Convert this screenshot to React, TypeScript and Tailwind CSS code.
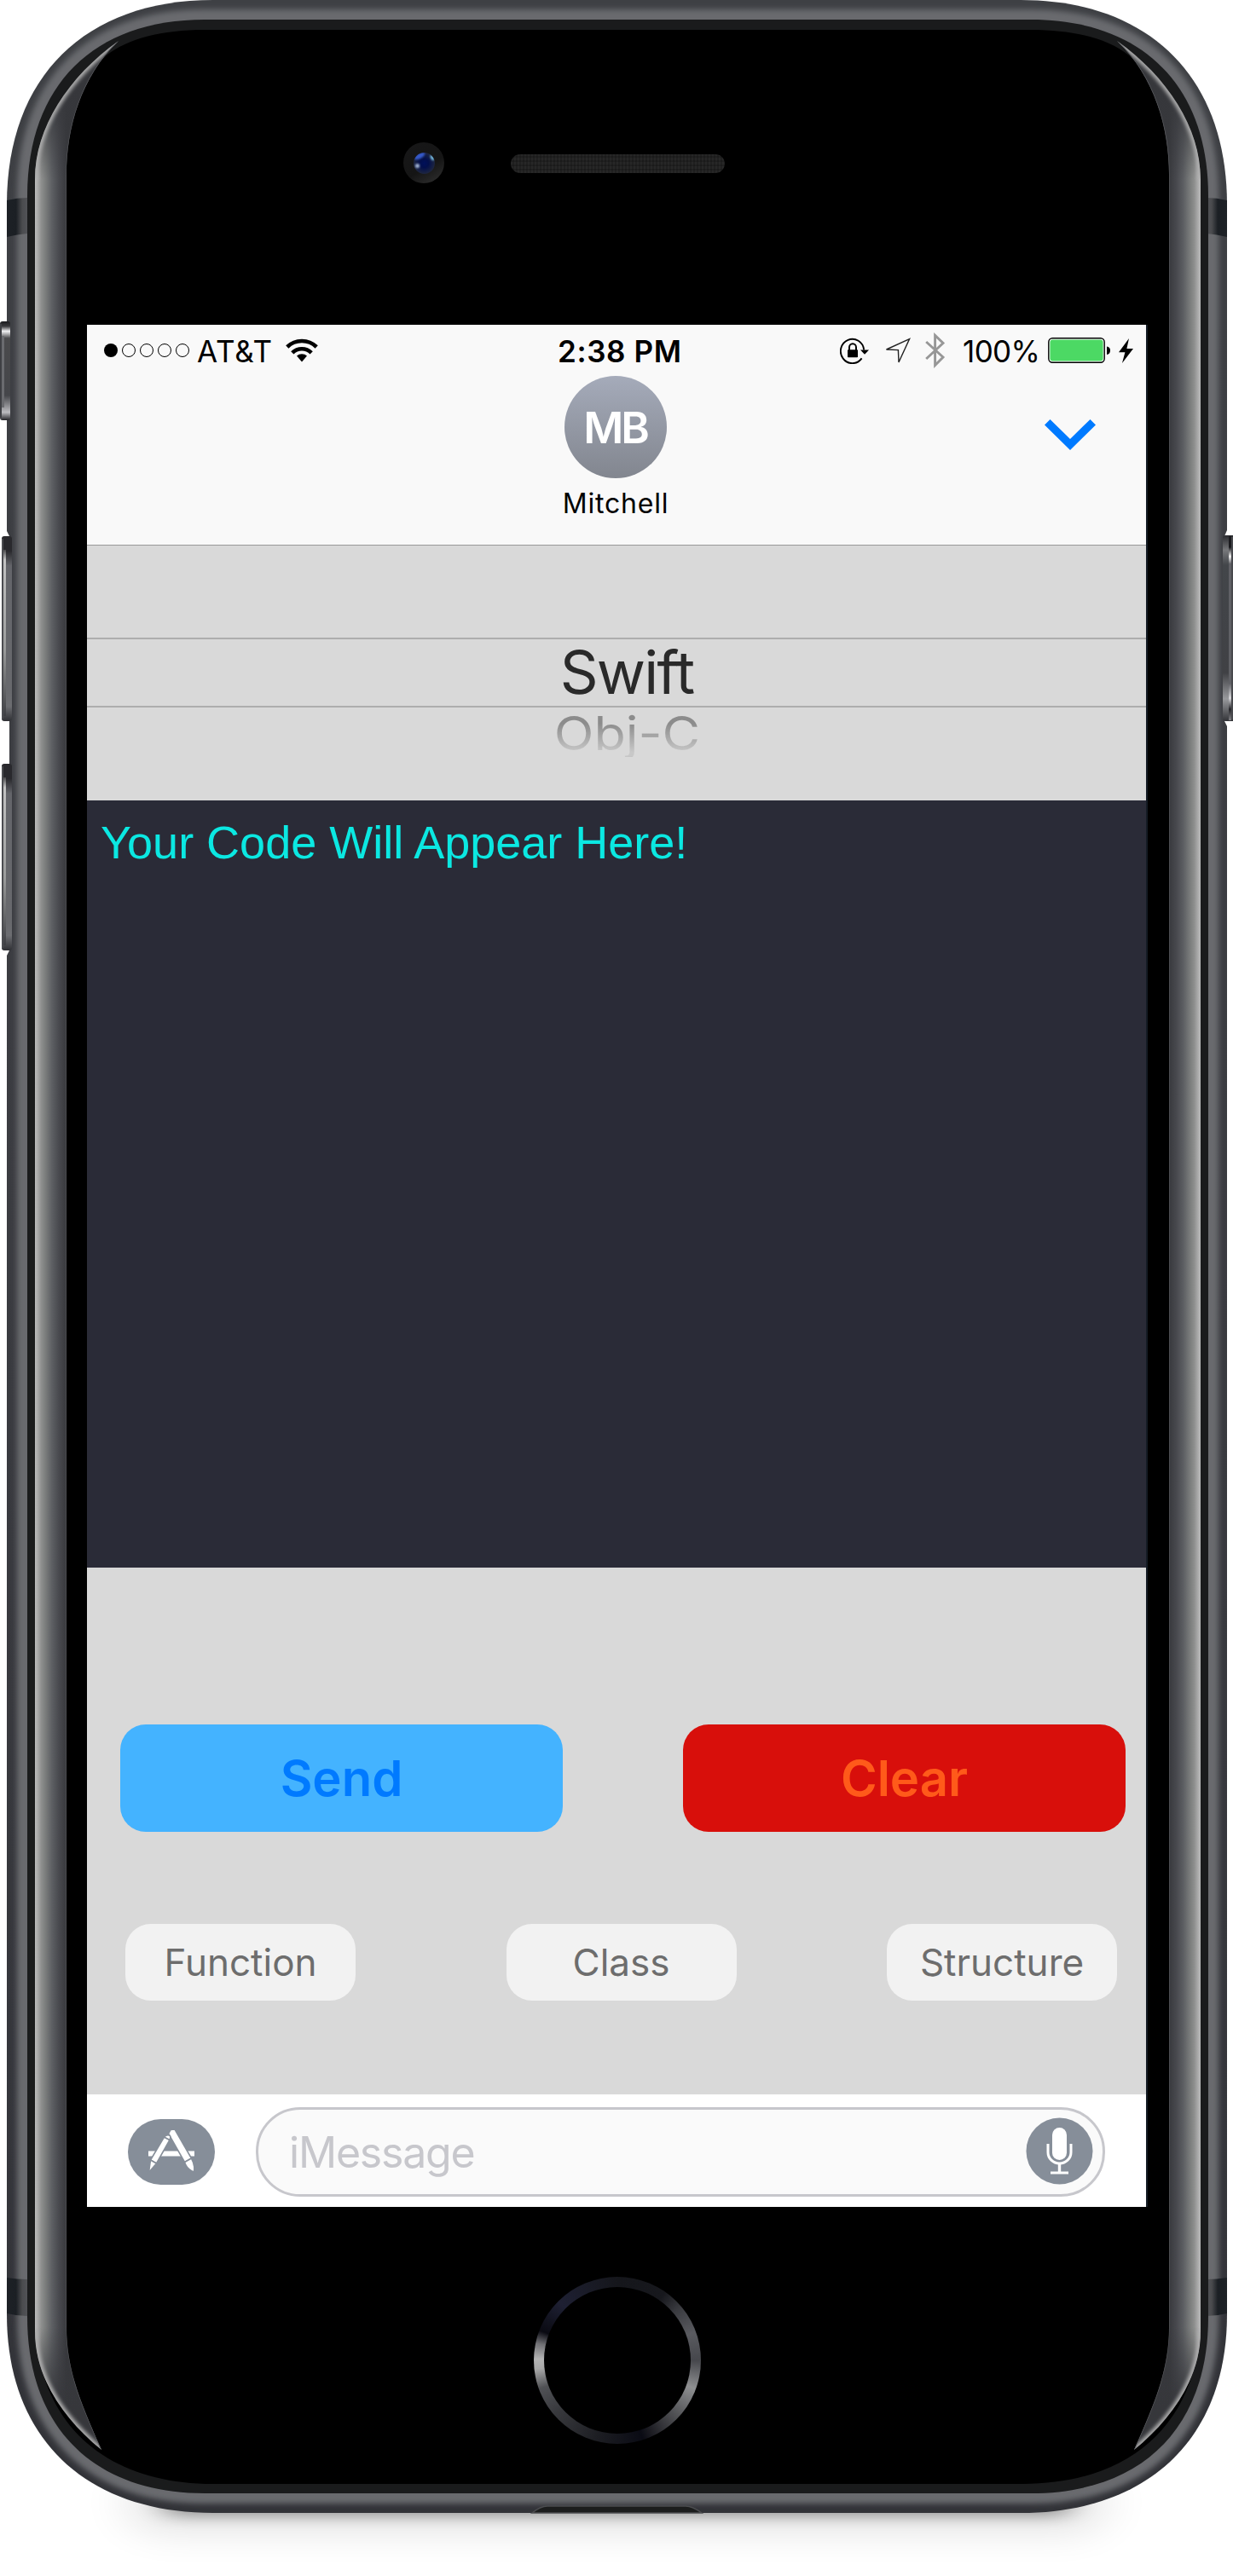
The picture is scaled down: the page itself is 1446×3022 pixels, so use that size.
import React from "react";

const OUTER =
  "M8 240 C8 90 100 0 250 0 H1197 C1347 0 1439 90 1439 240 V2715 C1439 2860 1347 2948 1197 2948 H250 C100 2948 8 2860 8 2715 Z";
const RIM =
  "M32 230 C32 100 110 23 240 23 H1209 C1339 23 1417 100 1417 230 V2718 C1417 2848 1339 2925 1209 2925 H240 C110 2925 32 2848 32 2718 Z";
const GLASS =
  "M78 205 C78 150 95 90 125 65 C150 45 190 35 240 35 H1209 C1259 35 1299 45 1324 65 C1354 90 1371 150 1371 205 L1408 2730 C1401 2850 1319 2914 1199 2914 H250 C130 2914 48 2850 41 2730 Z";
const EDGE =
  "M139 48 C80 90 41 150 41 210 V2735 C41 2790 75 2838 119 2874 C95 2820 78 2780 78 2730 V205 C78 150 95 90 139 48 Z";

function GlassEdge() {
  return (
    <g clipPath="url(#edgeClip)">
      <path d={EDGE} fill="url(#edge)" />
      <rect x="36" y="40" width="110" height="170" fill="url(#fadeTop)" />
      <rect x="36" y="2730" width="110" height="150" fill="url(#fadeBottom)" />
      <path d="M139 48 C80 90 41 150 41 210" fill="none" stroke="#b0b0b0" strokeWidth="6.5" filter="url(#soft2)" />
      <path d="M41 2735 C41 2790 75 2838 119 2874" fill="none" stroke="#b0b0b0" strokeWidth="6.5" filter="url(#soft2)" />
      <path d="M119 2874 C95 2820 78 2780 78 2730 V205 C78 150 95 90 139 48" fill="none" stroke="#55565a" strokeWidth="1.4" />
    </g>
  );
}

function Antenna() {
  return (
    <>
      <path d="M8 235 Q20 232 32 232 V274 Q20 275 8 278 Z" fill="url(#antenna)" />
      <path d="M8 2672 Q20 2674 32 2674 V2717 Q20 2717 8 2714 Z" fill="url(#antenna)" />
    </>
  );
}

function VolumeKey({ y, h }: { y: number; h: number }) {
  return (
    <g>
      <rect x="2" y={y} width="12" height={h} rx="3" fill="url(#key)" />
      <rect x="2" y={y + 3} width="2" height={h - 6} fill="#4b4c50" />
      <rect x="4" y={y + 16} width="3" height={h - 22} fill="url(#keyShine)" />
    </g>
  );
}

function PhoneBody() {
  return (
    <svg className="absolute inset-0" width="1446" height="3022" viewBox="0 0 1446 3022" aria-hidden="true">
      <defs>
        <linearGradient id="edge" gradientUnits="userSpaceOnUse" x1="41" x2="78" y1="0" y2="0">
          <stop offset="0" stopColor="#bababa" />
          <stop offset=".08" stopColor="#acacac" />
          <stop offset=".2" stopColor="#8e8f8e" />
          <stop offset=".35" stopColor="#787a7a" />
          <stop offset=".55" stopColor="#5c5e62" />
          <stop offset=".75" stopColor="#494a4f" />
          <stop offset="1" stopColor="#38393d" />
        </linearGradient>
        <linearGradient id="fadeTop" x1="0" x2="0" y1="0" y2="1">
          <stop offset="0" stopColor="#36373b" />
          <stop offset=".35" stopColor="#36373b" />
          <stop offset="1" stopColor="#36373b" stopOpacity="0" />
        </linearGradient>
        <linearGradient id="fadeBottom" x1="0" x2="0" y1="1" y2="0">
          <stop offset="0" stopColor="#36373b" />
          <stop offset=".35" stopColor="#36373b" />
          <stop offset="1" stopColor="#36373b" stopOpacity="0" />
        </linearGradient>
        <linearGradient id="antenna" x1="0" x2="1" y1="0" y2="0">
          <stop offset="0" stopColor="#1d2126" />
          <stop offset=".45" stopColor="#1b1f24" />
          <stop offset=".75" stopColor="#4a4b4e" />
          <stop offset="1" stopColor="#525357" />
        </linearGradient>
        <linearGradient id="key" x1="0" x2="0" y1="0" y2="1">
          <stop offset="0" stopColor="#29292d" />
          <stop offset=".08" stopColor="#29292d" />
          <stop offset=".16" stopColor="#64656a" />
          <stop offset=".85" stopColor="#68696d" />
          <stop offset=".92" stopColor="#6c6d71" />
          <stop offset="1" stopColor="#303135" />
        </linearGradient>
        <linearGradient id="keyShine" x1="0" x2="0" y1="0" y2="1">
          <stop offset="0" stopColor="#4a4a4c" />
          <stop offset=".06" stopColor="#c2c2c2" />
          <stop offset=".6" stopColor="#9a9b9b" />
          <stop offset="1" stopColor="#3e3f43" />
        </linearGradient>
        <linearGradient id="mute" x1="0" x2="0" y1="0" y2="1">
          <stop offset="0" stopColor="#1c1c1f" />
          <stop offset=".05" stopColor="#3a3a3d" />
          <stop offset=".1" stopColor="#f0f0f2" />
          <stop offset=".17" stopColor="#4a4a4c" />
          <stop offset=".75" stopColor="#45464a" />
          <stop offset=".92" stopColor="#bcbcc0" />
          <stop offset="1" stopColor="#232327" />
        </linearGradient>
        <linearGradient id="power" x1="0" x2="0" y1="0" y2="1">
          <stop offset="0" stopColor="#2a2b2f" />
          <stop offset=".08" stopColor="#77787b" />
          <stop offset=".16" stopColor="#43464a" />
          <stop offset=".74" stopColor="#404145" />
          <stop offset=".88" stopColor="#98999c" />
          <stop offset="1" stopColor="#333438" />
        </linearGradient>
        <linearGradient id="powerShine" x1="0" x2="0" y1="0" y2="1">
          <stop offset="0" stopColor="#1b1b1f" />
          <stop offset=".06" stopColor="#1b1b1f" />
          <stop offset=".11" stopColor="#f0f0f0" />
          <stop offset=".15" stopColor="#606166" />
          <stop offset=".8" stopColor="#606166" />
          <stop offset=".88" stopColor="#d5d5d8" />
          <stop offset=".94" stopColor="#26262a" />
          <stop offset="1" stopColor="#808084" />
        </linearGradient>
        <linearGradient id="metalV" gradientUnits="userSpaceOnUse" x1="0" x2="0" y1="0" y2="2948">
          <stop offset="0" stopColor="#3e4044" />
          <stop offset=".5" stopColor="#3a3b40" />
          <stop offset="1" stopColor="#323338" />
        </linearGradient>
        <filter id="soft2" filterUnits="userSpaceOnUse" x="0" y="0" width="1446" height="3022">
          <feGaussianBlur stdDeviation="2.2" />
        </filter>
        <filter id="soft3" filterUnits="userSpaceOnUse" x="0" y="0" width="1446" height="3022">
          <feGaussianBlur stdDeviation="3" />
        </filter>
        <filter id="soft8" filterUnits="userSpaceOnUse" x="0" y="2800" width="1446" height="222">
          <feGaussianBlur stdDeviation="16 8" />
        </filter>
        <filter id="soft20" filterUnits="userSpaceOnUse" x="0" y="2800" width="1446" height="222">
          <feGaussianBlur stdDeviation="28 20" />
        </filter>
        <clipPath id="edgeClip">
          <path d={EDGE} />
        </clipPath>
        <clipPath id="outerClip">
          <path d={OUTER} />
        </clipPath>
      </defs>

      {/* floor shadow */}
      <rect x="150" y="2900" width="1146" height="72" rx="36" fill="#000" opacity=".1" filter="url(#soft20)" />
      <rect x="190" y="2920" width="1066" height="32" rx="16" fill="#000" opacity=".34" filter="url(#soft8)" />

      {/* metal case */}
      <path d={OUTER} fill="url(#metalV)" />
      <g clipPath="url(#outerClip)">
        <path d={RIM} fill="none" stroke="#696a6e" strokeWidth="24" filter="url(#soft3)" />
      </g>
      <Antenna />
      <g transform="translate(1449 0) scale(-1 1)">
        <g transform="translate(2 0)">
          <Antenna />
        </g>
      </g>
      <path d="M624 2948 Q634 2940 642 2940 H804 Q812 2940 823 2948 Z" fill="#1c1d1d" stroke="#4b4c4f" strokeWidth="1.5" />
      <path d={RIM} fill="#1a1b1c" />
      <path d={GLASS} fill="#000" />
      <GlassEdge />
      <g transform="translate(1449 0) scale(-1 1)">
        <GlassEdge />
      </g>

      {/* side keys, with the shallow cuts around them */}
      <path d="M8 623 L11 629 V1115 L8 1121 Z" fill="#fff" />
      <path d="M1439 622 L1436 629 V846 L1439 852 Z" fill="#fff" />
      <rect x="0" y="377" width="12" height="116" rx="3" fill="url(#mute)" />
      <rect x="0" y="380" width="2" height="110" fill="#3f4044" />
      <rect x="2" y="394" width="3" height="84" fill="#6a6b6f" />
      <VolumeKey y={629} h={217} />
      <VolumeKey y={896} h={219} />
      <rect x="1434" y="628" width="14" height="218" rx="3" fill="url(#power)" />
      <rect x="1441" y="629" width="3" height="216" fill="url(#powerShine)" />
      <rect x="1444" y="630" width="2" height="214" fill="#47484c" />
    </svg>
  );
}

function Camera() {
  return (
    <svg className="mt-[-1px]" width="48" height="48" viewBox="0 0 48 48" aria-hidden="true">
      <defs>
        <linearGradient id="camRing" x1="0.2" y1="0" x2=".8" y2="1">
          <stop offset="0" stopColor="#171718" />
          <stop offset=".6" stopColor="#151515" />
          <stop offset="1" stopColor="#2d2d2d" />
        </linearGradient>
        <radialGradient id="lens">
          <stop offset="0" stopColor="#00105a" />
          <stop offset=".4" stopColor="#020f4c" />
          <stop offset="1" stopColor="#1e2640" />
        </radialGradient>
        <clipPath id="lensClip">
          <circle cx="24.5" cy="24.5" r="12.5" />
        </clipPath>
        <filter id="lensBlur">
          <feGaussianBlur stdDeviation="1.2" />
        </filter>
      </defs>
      <circle cx="24" cy="24" r="24" fill="url(#camRing)" />
      <circle cx="24.5" cy="24.5" r="12.5" fill="url(#lens)" />
      <g clipPath="url(#lensClip)">
        <g filter="url(#lensBlur)">
          <ellipse cx="19" cy="16" rx="7" ry="3" fill="#3458c8" transform="rotate(-28 19 16)" />
          <ellipse cx="34" cy="18" rx="1.8" ry="3.4" fill="#7cc4e8" transform="rotate(-30 34 18)" />
          <circle cx="16.5" cy="27.5" r="2.6" fill="#9fb0d0" />
        </g>
      </g>
    </svg>
  );
}

function WifiIcon() {
  return (
    <svg width="38" height="28" viewBox="0 0 38 28" aria-hidden="true">
      <g fill="none" stroke="#000" strokeWidth="4.6">
        <path d="M1.8 10 A24.5 24.5 0 0 1 36.2 10" />
        <path d="M7.8 16.8 A16 16 0 0 1 30.2 16.8" />
      </g>
      <path d="M19 27.5 L13 20.6 A9 9 0 0 1 25 20.6 Z" fill="#000" />
    </svg>
  );
}

function RotationLockIcon() {
  return (
    <svg width="34" height="31" viewBox="0 0 34 31" aria-hidden="true">
      <path d="M28.2 14.5 A13.7 14.2 0 1 0 25.6 24.4" fill="none" stroke="#000" strokeWidth="1.9" />
      <path d="M24 14.6 H34 L29 19.8 Z" fill="#000" />
      <rect x="9" y="14.2" width="12" height="9" rx=".8" fill="#000" />
      <path d="M11 15 V11.5 A4 4.2 0 0 1 19 11.5 V15" fill="none" stroke="#000" strokeWidth="2" />
    </svg>
  );
}

function LocationIcon() {
  return (
    <svg width="30" height="31" viewBox="0 0 30 31" aria-hidden="true">
      <path d="M28.6 1.6 L1.5 14 L15.4 14.6 L16 29 Z" fill="none" stroke="#222" strokeWidth="1.4" strokeLinejoin="miter" />
    </svg>
  );
}

function BluetoothIcon() {
  return (
    <svg width="24" height="42" viewBox="0 0 24 42" aria-hidden="true">
      <path d="M1.2 11 L21 29 L11.6 38.5 V3.5 L21 12.5 L1.2 31" fill="none" stroke="#979797" strokeWidth="2.9" />
    </svg>
  );
}

function BatteryIcon() {
  return (
    <svg width="74" height="30" viewBox="0 0 74 30" aria-hidden="true">
      <rect x=".8" y=".8" width="65.4" height="28.4" rx="4.5" fill="#fff" stroke="#000" strokeWidth="1.4" />
      <rect x="2.4" y="2.4" width="62.2" height="25.2" rx="3" fill="#4cd964" />
      <path d="M69 10.5 Q73 11 73 15 Q73 19.500 69 20 Z" fill="#000" />
    </svg>
  );
}

function BoltIcon() {
  return (
    <svg width="17" height="29" viewBox="0 0 17 29" aria-hidden="true">
      <path d="M12 0 L0 16.2 H7.4 L4 29 L17 12 H9.400 Z" fill="#000" />
    </svg>
  );
}

function AppStoreIcon() {
  return (
    <svg width="102" height="77" viewBox="0 0 102 77" aria-hidden="true">
      <rect width="102" height="77" rx="38.500" fill="#868e99" />
      <path d="M24 37.5 H78 V43.5 H24 Z" fill="#fff" />
      <g stroke="#868e99" strokeWidth="1.6" fill="#fff">
        <path d="M50 12.500 L55 12 L74.500 46 L66.500 50.500 L47.500 17 Z" />
        <path d="M66.500 50.500 L74.500 46 Q79 54 77.500 62 Q69 59 66.500 50.500 Z" />
        <path d="M42.500 21 L49 24.500 L33.500 52 L26.500 48 Z" />
        <path d="M42.500 21 Q46 17.500 49.500 19.500 Q50.500 21.500 49 24.500 Z" />
        <path d="M26.500 48 L33.500 52 L24.500 62.500 Z" />
      </g>
    </svg>
  );
}

function MicIcon() {
  return (
    <svg width="79" height="79" viewBox="0 0 79 79" aria-hidden="true">
      <circle cx="39.500" cy="39.500" r="39" fill="#868e99" />
      <rect x="31" y="12" width="17" height="38" rx="8.500" fill="#fff" />
      <path d="M26 31 V41 A13.500 13 0 0 0 53 41 V31" fill="none" stroke="#fff" strokeWidth="3" />
      <path d="M39.500 54 V65" stroke="#fff" strokeWidth="3.400" />
      <rect x="29" y="63.500" width="21" height="3" fill="#fff" />
    </svg>
  );
}

function StatusBar() {
  return (
    <div className="flex h-[60px] items-center text-[35px] leading-none text-black">
      <div className="flex w-[552px] items-center pl-5">
        <div className="flex gap-[5px]">
          <span className="size-4 rounded-full bg-black" />
          {[1, 2, 3, 4].map((i) => (
            <span key={i} className="size-4 rounded-full border border-black" />
          ))}
        </div>
        <span className="ml-[9px] w-[104px] pt-0.5 tracking-[0.8px]">AT&amp;T</span>
        <WifiIcon />
      </div>
      <span className="w-[147px] pt-0.5 font-semibold tracking-[0.6px] whitespace-nowrap">2:38 PM</span>
      <div className="flex flex-1 items-center justify-end pr-[15px]">
        <RotationLockIcon />
        <span className="ml-[19px]">
          <LocationIcon />
        </span>
        <span className="ml-[17px]">
          <BluetoothIcon />
        </span>
        <span className="ml-5 w-[90px] pt-0.5 tracking-[-0.6px] whitespace-nowrap">100%</span>
        <span className="ml-2.5">
          <BatteryIcon />
        </span>
        <span className="ml-[9px]">
          <BoltIcon />
        </span>
      </div>
    </div>
  );
}

function ChatHeader() {
  return (
    <div className="grid h-[199px] grid-cols-3 border-b border-[#999]">
      <span />
      <div className="flex flex-col items-center pr-0.5">
        <div className="flex size-[120px] items-center justify-center rounded-full bg-gradient-to-b from-[#a5abba] to-[#82868f] pr-px text-[51px] leading-none font-semibold tracking-[-3px] text-white">
          MB
        </div>
        <div className="mt-3 text-[32px] leading-[36px] tracking-[0.8px] text-black">Mitchell</div>
      </div>
      <div className="flex justify-end pt-[51px] pr-[59px]">
        <svg width="60" height="36" viewBox="0 0 60 36" aria-hidden="true">
          <path d="M0 6.500 L6.500 0 L30 23 L53.500 0 L60 6.500 L30 36 Z" fill="#007aff" />
        </svg>
      </div>
    </div>
  );
}

function LanguagePicker() {
  return (
    <div className="flex h-[299px] flex-col bg-[#d9d9d9] pt-[108px] text-center">
      <div className="flex h-[82px] items-center justify-center border-y-2 border-[#adadad] pl-6 text-[70px] leading-none tracking-[-1.8px] text-[#2a2a2a]">
        Swift
      </div>
      <div className="-mt-px pl-[25px]">
        <span className="inline-block scale-y-[.9] bg-gradient-to-b from-[#8c8c8c] from-30% to-[#c8c8c8] to-90% bg-clip-text text-[61px] leading-[62px] text-transparent">
          Obj-C
        </span>
      </div>
    </div>
  );
}

function CodeActions() {
  return (
    <div className="h-[618px] bg-[#d9d9d9] pt-[184px]">
      <div className="flex justify-between pr-[24px] pl-[39px]">
        <button className="h-[126px] w-[519px] rounded-[30px] bg-[#44b3ff] text-[58px] font-semibold text-[#007aff]">
          Send
        </button>
        <button className="h-[126px] w-[519px] rounded-[30px] bg-[#d80f0b] text-[58px] font-semibold text-[#ff5a1a]">
          Clear
        </button>
      </div>
      <div className="mt-[108px] flex justify-between pr-[34px] pl-[45px] text-[44px] text-[#6d6d6d]">
        {["Function", "Class", "Structure"].map((label) => (
          <button key={label} className="h-[90px] w-[270px] rounded-[30px] bg-[#f2f2f2]">
            {label}
          </button>
        ))}
      </div>
    </div>
  );
}

function MessageBar() {
  return (
    <div className="flex h-[132px] items-center bg-white pt-0.5 pr-12 pl-12">
      <AppStoreIcon />
      <div className="ml-12 flex h-[105px] w-[996px] items-center justify-between rounded-[52px] border-[3px] border-[#c7c7cc] bg-[#fafafa] pr-[11px] pb-0.5 pl-9">
        <span className="pt-1 text-[50px] leading-none tracking-[-1.2px] text-[#c7c7cc]">iMessage</span>
        <MicIcon />
      </div>
    </div>
  );
}

export default function App() {
  return (
    <main className="relative h-[3022px] w-[1446px] overflow-hidden bg-white font-['Inter',sans-serif]">
      <PhoneBody />
      <div className="relative flex flex-col pl-[102px]">
        <div className="flex h-[381px] items-start pt-[168px] pl-[371px]">
          <Camera />
          <div className="mt-[13px] ml-[78px] h-[22px] w-[251px] rounded-full bg-[#272727] bg-[repeating-linear-gradient(90deg,#0000_0_2px,#0000002e_2px_4px),repeating-linear-gradient(0deg,#0000_0_3px,#0000002e_3px_5px)]" />
        </div>
        <section className="h-[2208px] w-[1244px] border-r-2 border-[#141b24]">
          <header className="h-[259px] bg-[#f9f9f9]">
            <StatusBar />
            <ChatHeader />
          </header>
          <LanguagePicker />
          <div className="h-[900px] bg-[#2a2b37] pt-[18px] pl-4 font-['Liberation_Sans',sans-serif] text-[54px] leading-[62px] text-[#0be8e2]">
            Your Code Will Appear Here!
          </div>
          <CodeActions />
          <MessageBar />
        </section>
        <div className="mt-[82px] ml-[524px] size-[196px] rounded-full bg-[conic-gradient(#15161b,#17181d_35deg,#3a3b40_50deg,#5a5b60_70deg,#46474c_90deg,#8e8f91_110deg,#58595c_130deg,#1c1c22_155deg,#0a0b14_162deg,#1d1e23_195deg,#38393d_230deg,#505155_250deg,#a8a8a8_264deg,#b4b4b4_271deg,#707074_282deg,#0a0a12_291deg,#1e2033_315deg,#15161b)] p-3">
          <div className="size-full rounded-full bg-black" />
        </div>
      </div>
    </main>
  );
}
